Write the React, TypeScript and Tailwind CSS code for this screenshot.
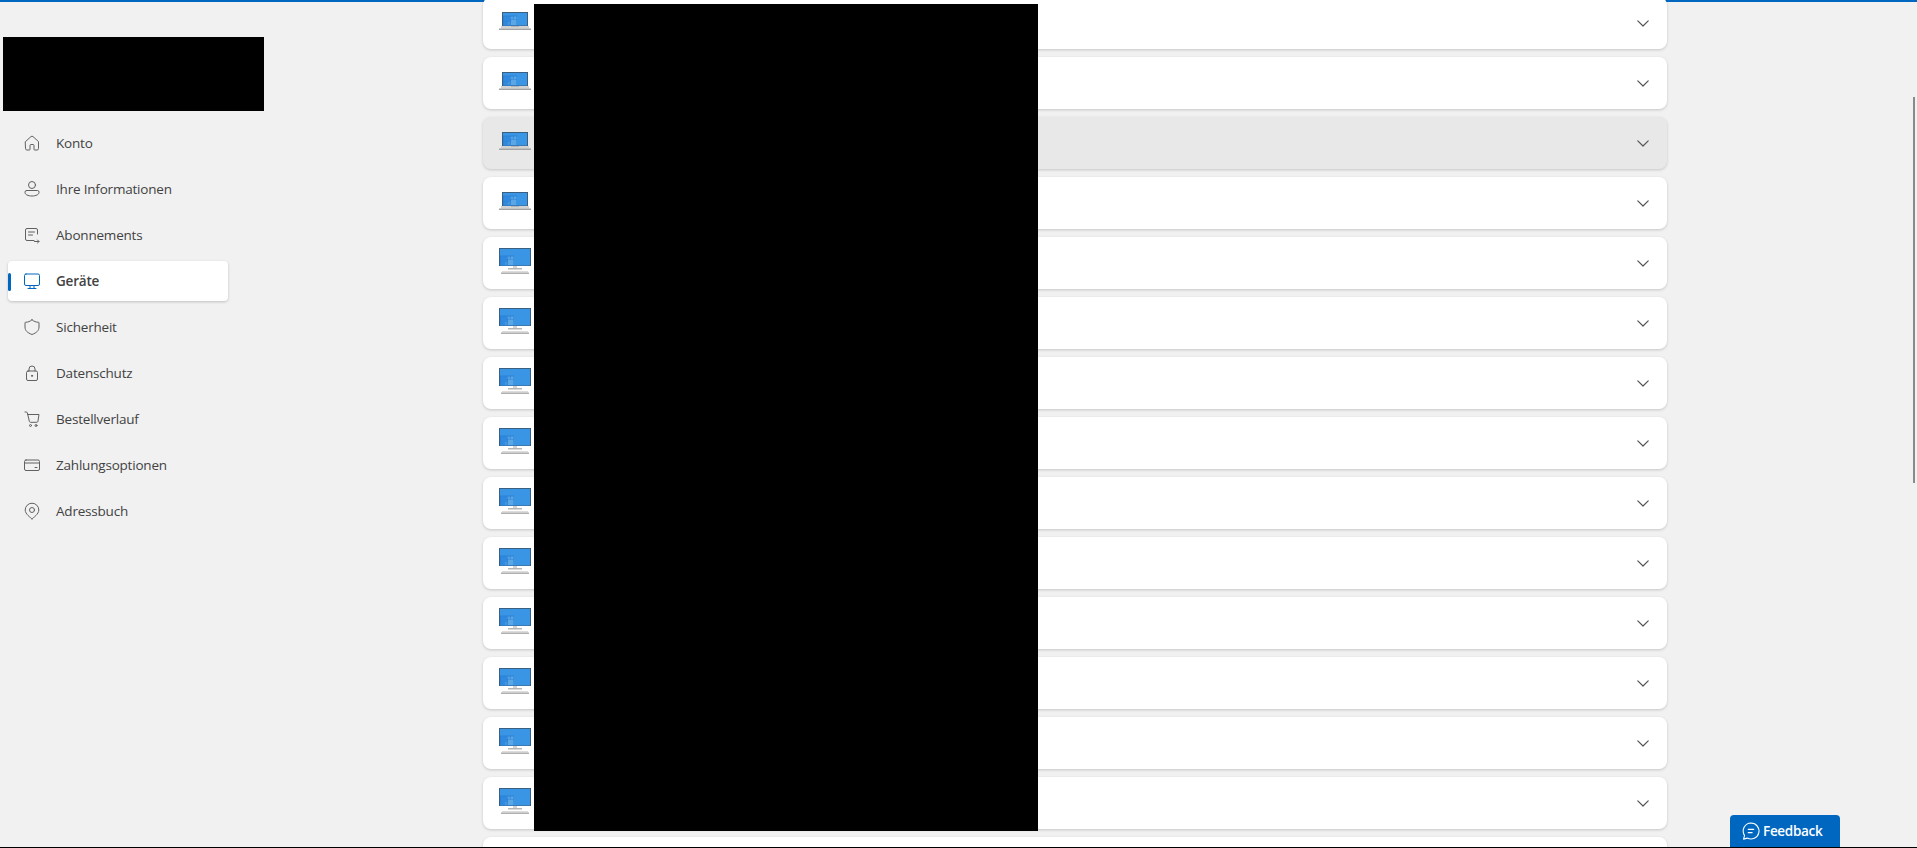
import React from "react";

const navItems = [
  { label: "Konto", icon: "home" },
  { label: "Ihre Informationen", icon: "person" },
  { label: "Abonnements", icon: "subs" },
  { label: "Geräte", icon: "monitor", active: true },
  { label: "Sicherheit", icon: "shield" },
  { label: "Datenschutz", icon: "lock" },
  { label: "Bestellverlauf", icon: "cart" },
  { label: "Zahlungsoptionen", icon: "card" },
  { label: "Adressbuch", icon: "pin" },
];

const devices = [
  "laptop", "laptop", "laptop", "laptop", "desktop", "desktop", "desktop", "desktop",
  "desktop", "desktop", "desktop", "desktop", "desktop", "desktop", "desktop",
];

const NavIcon = ({ name, color }: { name: string; color: string }) => (
  <svg width="20" height="20" viewBox="0 0 20 20" fill="none" stroke={color} strokeWidth="1" strokeLinejoin="round" strokeLinecap="round" className="shrink-0">
    {name === "home" && <path d="M3.500 8.600 9 3.600a1.500 1.500 0 0 1 2 0l5.500 5v7a1.400 1.400 0 0 1-1.400 1.400H12.500a.5.500 0 0 1-.5-.5v-4a1 1 0 0 0-1-1H9a1 1 0 0 0-1 1v4a.5.500 0 0 1-.5.500H4.900a1.400 1.400 0 0 1-1.400-1.400z" />}
    {name === "person" && (
      <>
        <circle cx="10" cy="6" r="3.500" />
        <path d="M4.500 11.500h11a1.500 1.500 0 0 1 1.500 1.500v.5c0 2-3 3.500-7 3.500s-7-1.500-7-3.500V13a1.500 1.500 0 0 1 1.500-1.500z" />
      </>
    )}
    {name === "subs" && (
      <>
        <path d="M15.500 9V5a1.500 1.500 0 0 0-1.500-1.500H5A1.500 1.500 0 0 0 3.500 5v9A1.500 1.500 0 0 0 5 15.500h7" />
        <path d="M6.500 7h6M6.500 10h4M12.500 16.500h4.500M15.500 15l1.500 1.500-1.500 1.500" />
      </>
    )}
    {name === "monitor" && (
      <>
        <rect x="2.500" y="3" width="15" height="11.500" rx="1.500" />
        <path d="M8 14.500V17M12 14.500V17M6 17.500h8" />
      </>
    )}
    {name === "shield" && <path d="M10 2.800c2 1.700 4 2.400 6.500 2.500a.5.500 0 0 1 .5.500V10c0 3.500-2.300 5.800-7 7.500-4.700-1.700-7-4-7-7.500V5.800a.5.500 0 0 1 .5-.5C6 5.200 8 4.500 10 2.800z" />}
    {name === "lock" && (
      <>
        <path d="M7 8V6a3 3 0 0 1 6 0v2" />
        <rect x="4.500" y="8" width="11" height="9.500" rx="1.500" />
        <circle cx="10" cy="12.800" r=".6" fill={color} />
      </>
    )}
    {name === "cart" && (
      <>
        <path d="M3 3h1.200c.6 0 1 .4 1.200 1l2 8.500c.1.500.5.800 1 .8h6.500c.5 0 .9-.3 1-.8L17 5.500H5.500" />
        <circle cx="8.500" cy="16.500" r="1" />
        <circle cx="14" cy="16.500" r="1" />
      </>
    )}
    {name === "card" && (
      <>
        <rect x="2.500" y="5" width="15" height="10.500" rx="1.500" />
        <path d="M2.500 8h15M13 12.500h2" />
      </>
    )}
    {name === "pin" && (
      <>
        <path d="M10 17.800c-1.500-1.200-6.800-4.700-6.800-8.800a6.800 6.800 0 0 1 13.600 0c0 4.100-5.300 7.600-6.800 8.800z" />
        <circle cx="10" cy="9" r="2.500" />
      </>
    )}
  </svg>
);

// the Windows wallpaper tiles in the lower left of each device screen
const Tiles = ({ x, y }: { x: number; y: number }) => (
  <g>
    <rect x={x} y={y} width="14" height="10" fill="#2a80d6" />
    <rect x={x + 1} y={y + 1} width="6" height="4.500" fill="#2f8adf" />
    <rect x={x + 7.500} y={y + 1} width="3" height="2.500" fill="#4f9fe2" />
    <rect x={x + 11} y={y + 1} width="2.500" height="2.500" fill="#5ba7e6" />
    <rect x={x + 1} y={y + 6} width="3" height="3.500" fill="#2f8adf" />
    <rect x={x + 4.500} y={y + 6} width="3" height="3.500" fill="#4394dd" />
    <rect x={x + 8} y={y + 4} width="5.500" height="5.500" fill="#5ba7e6" />
  </g>
);

const DeviceImage = ({ kind }: { kind: string }) =>
  kind === "laptop" ? (
    <svg width="32" height="18" viewBox="0 0 32 18" className="mb-1 block shrink-0">
      <rect x="3" y="0" width="26" height="14" fill="#3b5f7f" />
      <rect x="4" y="1" width="24" height="12.500" fill="#3a96e4" />
      <Tiles x={4} y={3.500} />
      <rect x="2" y="14" width="28" height="2.500" fill="#d2d2d2" />
      <rect x="12" y="14" width="8" height="1" fill="#b5b5b5" />
      <rect x="0" y="16.500" width="32" height="1.500" fill="#a3a3a3" />
    </svg>
  ) : (
    <svg width="32" height="26" viewBox="0 0 32 26" className="mb-1 block shrink-0">
      <rect x="0" y="0" width="32" height="18" fill="#3b5f7f" />
      <rect x="1" y="1" width="30" height="16.500" fill="#3a96e4" />
      <Tiles x={1} y={7.500} />
      <rect x="14" y="18" width="4" height="2" fill="#d2d2d2" />
      <rect x="9" y="20" width="14" height="1.500" fill="#b5b5b5" />
      <rect x="3" y="23" width="26" height="1.500" fill="#dcdcdc" />
      <rect x="2" y="24.500" width="28" height="1.500" fill="#b0b0b0" />
    </svg>
  );

const DeviceRow = ({ kind, hover }: { kind: string; hover: boolean }) => (
  <div className={`flex h-[52px] shrink-0 items-center justify-between rounded-lg pl-4 pr-[18px] shadow-[0_1px_3px_rgba(0,0,0,0.18)] ${hover ? "bg-[#e8e8e8]" : "bg-white"}`}>
    <DeviceImage kind={kind} />
    <svg width="12" height="7" viewBox="0 0 12 7" fill="none" stroke="#555555" strokeWidth="1.200" strokeLinecap="round" strokeLinejoin="round">
      <path d="M.8.8 6 6l5.200-5.200" />
    </svg>
  </div>
);

export default function App() {
  return (
    <div className="relative flex h-[848px] w-full flex-col overflow-hidden bg-[#f1f1f1] font-['Open_Sans',sans-serif]">
      <div className="h-[2px] w-full shrink-0 bg-[#0067c0]" />

      <div className="flex min-h-0 flex-1">
        <aside className="w-[483px] shrink-0">
          <div className="ml-[3px] mt-[35px] h-[74px] w-[261px] bg-black" />
          <nav className="ml-2 mt-3 flex w-[220px] flex-col gap-[6px]">
            {navItems.map((item) => (
              <div
                key={item.label}
                className={`relative flex h-10 items-center gap-[14px] rounded pl-[14px] text-[13.500px] tracking-[-0.2px] ${
                  item.active
                    ? "bg-white font-semibold text-[#424242] shadow-[0_1px_3px_rgba(0,0,0,0.2)]"
                    : "text-[#424242]"
                }`}
              >
                {item.active && <span className="absolute left-0 top-[12px] h-[18px] w-[3px] rounded-sm bg-[#0067c0]" />}
                <NavIcon name={item.icon} color={item.active ? "#0067c0" : "#616161"} />
                <span>{item.label}</span>
              </div>
            ))}
          </nav>
        </aside>

        <main className="-mt-[5px] flex w-[1184px] shrink-0 flex-col gap-2">
          {devices.map((kind, i) => (
            <DeviceRow key={i} kind={kind} hover={i === 2} />
          ))}
        </main>
      </div>

      <div className="absolute bottom-0 left-0 h-px w-full bg-black" />
      {/* redacted block over the device names */}
      <div className="absolute left-[534px] top-[4px] h-[827px] w-[504px] bg-black" />
      <div className="absolute left-[1913px] top-[97px] h-[386px] w-[2px] bg-[#8a8a8a]" />
      <button className="absolute bottom-px left-[1730px] flex h-8 w-[110px] items-center gap-[2px] rounded-t bg-[#0067c0] pl-[11px] text-[13.500px] font-semibold tracking-[-0.3px] text-white">
        <svg width="20" height="20" viewBox="0 0 18 18" fill="none" stroke="white" strokeWidth="1" strokeLinecap="round" strokeLinejoin="round">
          <path d="M9 1.800a7.200 7.200 0 1 1-3.300 13.600l-3.400.9.900-3.300A7.200 7.200 0 0 1 9 1.800z" />
          <path d="M6.500 7.500h5M6.500 10.500h3.500" />
        </svg>
        Feedback
      </button>
    </div>
  );
}
